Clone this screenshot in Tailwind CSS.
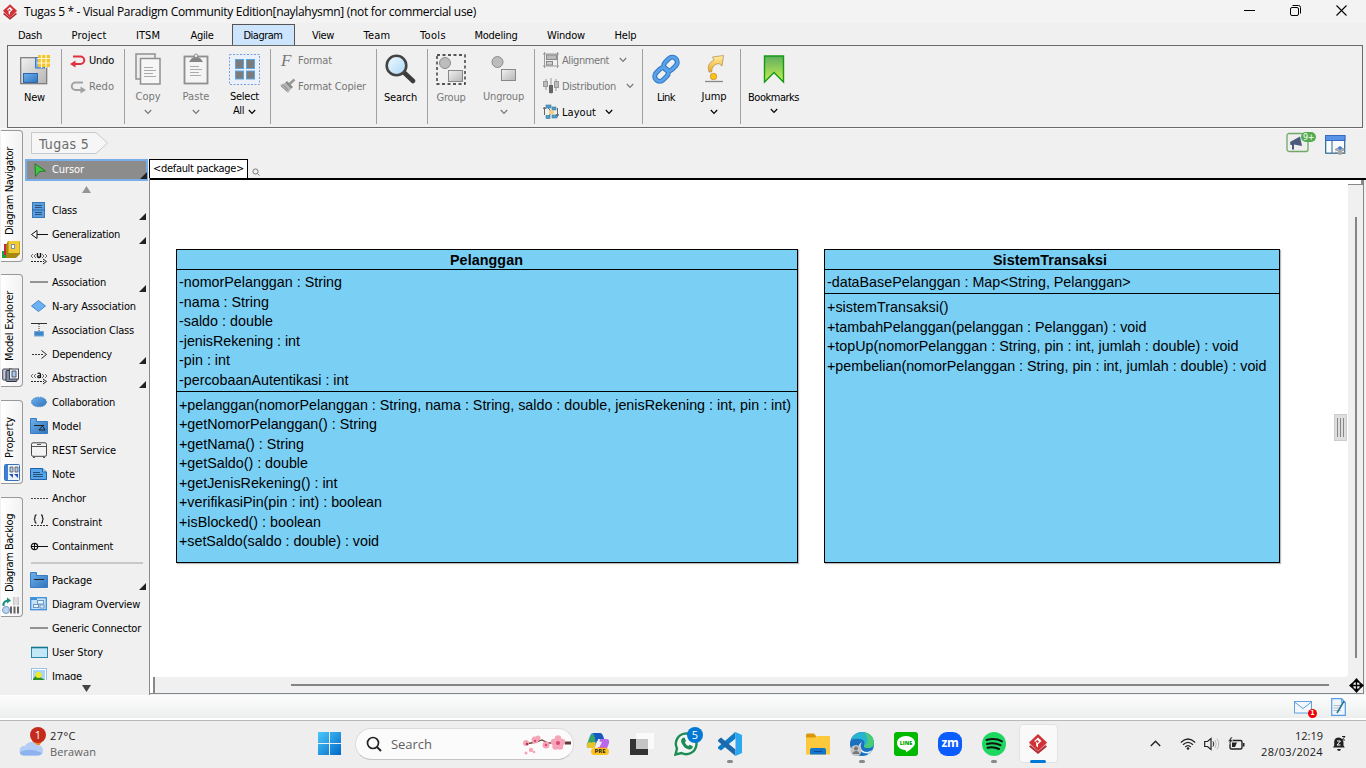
<!DOCTYPE html>
<html lang="en">
<head>
<meta charset="utf-8">
<title>Tugas 5 * - Visual Paradigm Community Edition</title>
<script src="https://cdn.jsdelivr.net/npm/@tailwindcss/browser@4"></script>
</head>
<body class="w-[1366px] h-[768px] overflow-hidden bg-[#f0f0f0] text-black font-['DejaVu_Sans_Condensed','DejaVu_Sans',sans-serif] text-[11px] leading-[14px] whitespace-nowrap">
<svg class="absolute h-0 w-0">
  <defs>
    <linearGradient id="blue" x1="0" y1="0" x2="1" y2="1"><stop offset="0" stop-color="#6fb0ea"/><stop offset="1" stop-color="#2f74be"/></linearGradient>
    <linearGradient id="gray" x1="0" y1="0" x2="1" y2="1"><stop offset="0" stop-color="#f2f2f2"/><stop offset="1" stop-color="#b4b4b4"/></linearGradient>
    <linearGradient id="green" x1="0" y1="0" x2="0" y2="1"><stop offset="0" stop-color="#5fae5f"/><stop offset="1" stop-color="#c9ef50"/></linearGradient>
    <linearGradient id="win" x1="0" y1="0" x2="1" y2="1"><stop offset="0" stop-color="#4cc8fb"/><stop offset="1" stop-color="#0068c8"/></linearGradient>
    <linearGradient id="glass" x1="0" y1="0" x2="1" y2="1"><stop offset="0" stop-color="#f4fbff"/><stop offset="1" stop-color="#a8d6f8"/></linearGradient>
    <linearGradient id="gold" x1="0" y1="0" x2="0" y2="1"><stop offset="0" stop-color="#fff0a8"/><stop offset="1" stop-color="#f2a81c"/></linearGradient>
    <symbol id="vp" viewBox="0 0 18 20"><path d="M9 5L18 12.500L9 20L0 12.500Z" fill="#b02a30"/><path d="M9 2.500L18 10L9 17.500L0 10Z" fill="#e8b0b0"/><path d="M9 0L18 8.500L9 17L0 8.500Z" fill="#d03238"/><path d="M9 3.500L12.500 7L9 10.200L9 13.500L7.200 12V7.500L9 9L10 7.300L8.200 6L6 8L5.200 7Z" fill="#fff"/></symbol>
    <symbol id="chev" viewBox="0 0 8 6"><path d="M.8 1L4 4.300L7.200 1" fill="none" stroke="currentColor" stroke-width="1.200"/></symbol>
    <symbol id="corner" viewBox="0 0 7 7"><path d="M7 0V7H0Z" fill="#222"/></symbol>
  </defs>
</svg>

<div class="flex h-[768px] flex-col">
  <!-- title bar -->
  <header class="flex h-[23px] shrink-0 items-center bg-[#f3f3f3] pl-[3px] font-['Open_Sans','Noto_Sans',sans-serif] text-xs">
    <svg class="h-4 w-[14px]"><use href="#vp"/></svg>
    <span data-w="452" class="ml-[7px] pt-px">Tugas 5 * - Visual Paradigm Community Edition[naylahysmn] (not for commercial use)</span>
    <div class="ml-auto flex items-center gap-[35px] pb-[2px] pr-[19px]">
      <svg class="h-[11px] w-[11px]" viewBox="0 0 11 11"><path d="M0 5.500H11" stroke="#000"/></svg>
      <svg class="h-[11px] w-[11px]" viewBox="0 0 11 11"><rect x=".5" y="2.500" width="8" height="8" rx="1.500" fill="none" stroke="#000"/><path d="M2.500 .5H8.500Q10.500 .5 10.500 2.500V8.500" fill="none" stroke="#000"/></svg>
      <svg class="h-[11px] w-[11px]" viewBox="0 0 11 11"><path d="M.5 .5L10.500 10.500M10.500 .5L.5 10.500" stroke="#000" stroke-width="1.100"/></svg>
    </div>
  </header>

  <!-- menu tabs -->
  <nav class="flex h-[22px] shrink-0 items-end [&_span]:pt-[2px]">
    <div class="flex h-[20px] w-[60px] items-center justify-center"><span data-w="24">Dash</span></div>
    <div class="flex h-[20px] w-[58px] items-center justify-center"><span data-w="35">Project</span></div>
    <div class="flex h-[20px] w-[60px] items-center justify-center"><span data-w="24">ITSM</span></div>
    <div class="flex h-[20px] w-[48px] items-center justify-center"><span data-w="23">Agile</span></div>
    <div class="ml-[6px] flex h-[21px] w-[63px] items-center justify-center border border-b-0 border-[#555] bg-[#cce4fc] pr-px"><span data-w="39">Diagram</span></div>
    <div class="flex h-[20px] w-[56px] items-center justify-center"><span data-w="22">View</span></div>
    <div class="flex h-[20px] w-[52px] items-center justify-center"><span data-w="27">Team</span></div>
    <div class="flex h-[20px] w-[60px] items-center justify-center"><span data-w="26">Tools</span></div>
    <div class="flex h-[20px] w-[66px] items-center justify-center"><span data-w="43">Modeling</span></div>
    <div class="flex h-[20px] w-[74px] items-center justify-center"><span data-w="38">Window</span></div>
    <div class="flex h-[20px] w-[45px] items-center justify-center"><span data-w="22">Help</span></div>
  </nav>

  <!-- ribbon -->
  <section class="ml-[7px] mr-[3px] flex h-[83px] shrink-0 border border-[#696969] py-[3px] text-[#777] [&_span]:pt-[2px]">
    <div class="flex w-[54px] flex-col items-center border-r border-[#a0a0a0] pt-[4px] text-black">
      <svg class="h-8 w-[31px]" viewBox="0 0 31 32"><rect x="1.700" y="4.700" width="26" height="26" fill="url(#gray)" stroke="#777" stroke-width="1.200"/><rect x="16.500" y="5" width="9" height="10" fill="#7db0ea" stroke="#4478b8"/><rect x="4.500" y="20.500" width="14" height="9" fill="url(#blue)" stroke="#2c66ae"/><rect x="19" y="2" width="12" height="12" fill="#f4c430"/><path d="M18 5.500H31M18 10H31M22.500 1V15M27 1V15" stroke="#fff8d0" stroke-width="1.200"/></svg>
      <span data-w="21" class="mt-[4px]">New</span>
    </div>
    <div class="flex w-[63px] flex-col gap-[10px] border-r border-[#a0a0a0] pl-[8px] pt-[3px]">
      <div class="flex items-center gap-[3px] text-black"><svg class="mt-px h-[14px] w-4" viewBox="0 0 16 14"><path d="M3 2.500H10.500A3.700 3.700 0 0 1 10.500 10H4" fill="none" stroke="#e03040" stroke-width="2"/><path d="M5.500 6.500V13.500L0 10Z" fill="#e03040"/></svg><span data-w="25">Undo</span></div>
      <div class="flex items-center gap-[3px]"><svg class="mt-px h-[14px] w-4" viewBox="0 0 16 14"><path d="M13 2.500H5.500A3.700 3.700 0 0 0 5.500 10H11" fill="none" stroke="#a2a2a2" stroke-width="2"/><path d="M10.500 6.500V13.500L16 10Z" fill="#a2a2a2"/></svg><span data-w="25">Redo</span></div>
    </div>
    <div class="flex w-[146px] border-r border-[#a0a0a0] pt-[4px]">
      <div class="flex w-[46px] flex-col items-center">
        <svg class="h-8 w-[26px]" viewBox="0 0 26 32"><rect x="1" y="1" width="19" height="25" fill="#eee" stroke="#909090" stroke-width="1.500"/><rect x="5.500" y="5.500" width="19.500" height="25.500" fill="#f6f6f6" stroke="#909090" stroke-width="1.500"/><path d="M9 14.500H18M9 17.500H21M9 20.500H18M9 23.500H21" stroke="#aaa"/></svg>
        <span data-w="25" class="mt-[3px]">Copy</span><svg class="mt-[5px] h-[6px] w-2"><use href="#chev"/></svg>
      </div>
      <div class="ml-px flex w-[48px] flex-col items-center">
        <svg class="h-8 w-[26px]" viewBox="0 0 26 32"><rect x="1.500" y="3.500" width="23" height="27" fill="#f4f4f4" stroke="#909090" stroke-width="1.800"/><path d="M6 9Q8 5 11 4A2 2 0 0 1 15 4Q18 5 20 9Z" fill="#858585"/><circle cx="13" cy="2.800" r="1.800" fill="#eee" stroke="#909090"/><path d="M7 13.500H16M7 16.500H19M7 19.500H16M7 22.500H18" stroke="#aaa"/></svg>
        <span data-w="27" class="mt-[3px]">Paste</span><svg class="mt-[5px] h-[6px] w-2"><use href="#chev"/></svg>
      </div>
      <div class="flex w-[49px] flex-col items-center text-black">
        <svg class="h-8 w-[31px]" viewBox="0 0 31 32"><rect x=".5" y="1.500" width="30" height="30" fill="#eaf1fa" stroke="#7b9edb" stroke-dasharray="2 1.500"/><g fill="#7c7c7c" stroke="#5aa5e0"><rect x="6.500" y="6.500" width="8" height="9"/><rect x="17.500" y="6.500" width="8" height="9"/><rect x="6.500" y="18" width="8" height="8"/><rect x="17.500" y="18" width="8" height="8"/></g></svg>
        <span data-w="29" class="mt-[3px]">Select</span>
        <div class="-mt-[2px] flex items-center gap-[4px]"><span data-w="11">All</span><svg class="mt-1 h-[6px] w-2"><use href="#chev"/></svg></div>
      </div>
    </div>
    <div class="flex w-[106px] flex-col gap-[10px] border-r border-[#a0a0a0] pl-[8px] pt-[3px]">
      <div class="flex items-center"><span class="w-[19px] pl-[2px] font-['Liberation_Serif',serif] text-[17px] italic leading-[14px]">F</span><span data-w="34">Format</span></div>
      <div class="flex items-center gap-[2px]"><svg class="h-4 w-[17px]" viewBox="0 0 17 16"><path d="M15.500 1.500L10.500 6" stroke="#999" stroke-width="2.500"/><path d="M8 3L14 9L12 11L6 5Z" fill="#8a8a8a"/><path d="M6 5L12 11L9 15L1 7Z" fill="#b5b5b5"/><path d="M4 6.500L9 12M2 8L8 13" stroke="#8a8a8a"/></svg><span data-w="68">Format Copier</span></div>
    </div>
    <div class="flex w-[51px] flex-col items-center border-r border-[#a0a0a0] pr-[3px] pt-[5px] text-black">
      <svg class="h-[31px] w-[31px]" viewBox="0 0 31 31"><path d="M18.500 18L28 27" stroke="#3c3c3c" stroke-width="4.500" stroke-linecap="round"/><circle cx="11.500" cy="11.500" r="9.800" fill="url(#glass)" stroke="#444" stroke-width="2.600"/></svg>
      <span data-w="33" class="mt-[4px]">Search</span>
    </div>
    <div class="flex w-[107px] border-r border-[#a0a0a0] pt-[5px]">
      <div class="flex w-[46px] flex-col items-center">
        <svg class="h-[31px] w-[30px]" viewBox="0 0 30 31"><rect x="1" y="1" width="28" height="29" fill="none" stroke="#222" stroke-width="1.300" stroke-dasharray="3 2.500"/><circle cx="9" cy="9" r="5.500" fill="#bcbcbc" stroke="#8c8c8c"/><rect x="12.500" y="16.500" width="14" height="11" fill="url(#gray)" stroke="#888"/></svg>
        <span data-w="29" class="mt-[4px]">Group</span>
      </div>
      <div class="flex w-[59px] flex-col items-center">
        <svg class="h-[31px] w-[26px]" viewBox="0 0 26 31"><circle cx="6.500" cy="8" r="5.500" fill="#bcbcbc" stroke="#8c8c8c"/><rect x="10.500" y="15.500" width="14" height="11" fill="url(#gray)" stroke="#888"/></svg>
        <span data-w="41" class="mt-[3px]">Ungroup</span><svg class="mt-[5px] h-[6px] w-2"><use href="#chev"/></svg>
      </div>
    </div>
    <div class="flex w-[108px] flex-col gap-[10px] border-r border-[#a0a0a0] pl-[8px] pt-[3px]">
      <div class="flex items-center"><svg class="mr-[3px] h-4 w-4" viewBox="0 0 16 16"><path d="M1.500 0V16M14.500 0V16M0 2H16M0 14H16" stroke="#999"/><rect x="3.500" y="3" width="10" height="4.500" fill="#bbb" stroke="#888"/><rect x="3.500" y="9.500" width="6" height="3.500" fill="#ccc" stroke="#888"/></svg><span data-w="47">Alignment</span><svg class="ml-[10px] h-[6px] w-2"><use href="#chev"/></svg></div>
      <div class="flex items-center"><svg class="mr-[3px] h-4 w-4" viewBox="0 0 16 16"><path d="M3 1V12M8 0V16M13 1V13" stroke="#999"/><rect x=".5" y="3.500" width="4" height="5" fill="#bbb" stroke="#999"/><rect x="6" y="7" width="4" height="8" fill="#666"/><rect x="11.500" y="3.500" width="4" height="6" fill="#bbb" stroke="#999"/></svg><span data-w="54">Distribution</span><svg class="ml-[10px] h-[6px] w-2"><use href="#chev"/></svg></div>
      <div class="flex items-center text-black"><svg class="mr-[3px] h-4 w-4" viewBox="0 0 16 16"><path d="M1.500 4V11M0 5L1.500 3L3 5M14.500 4V12M13 10L14.500 12.500L16 10M5 4L9 8L5 13" fill="none" stroke="#666"/><g fill="#4f9fcc" stroke="#3a7894" stroke-width=".6"><rect x="3" y="1" width="5" height="3"/><rect x="9" y="3" width="4" height="3"/><rect x="3" y="11.500" width="4" height="3"/><rect x="9" y="11" width="5" height="3"/></g><rect x="6" y="6.500" width="5" height="3.500" fill="#f0d080"/></svg><span data-w="34">Layout</span><svg class="ml-[9px] h-[6px] w-2"><use href="#chev"/></svg></div>
    </div>
    <div class="flex w-[98px] border-r border-[#a0a0a0] pt-[5px] text-black">
      <div class="flex w-[46px] flex-col items-center">
        <svg class="h-[31px] w-[30px]" viewBox="0 0 30 31"><g fill="none" stroke="#2f78c4" stroke-width="5"><rect x="-7.500" y="-5" width="15" height="10" rx="5" transform="translate(19.500 10) rotate(-45)"/><rect x="-7.500" y="-5" width="15" height="10" rx="5" transform="translate(10.500 20.500) rotate(-45)"/></g><g fill="none" stroke="#5aa2ea" stroke-width="3"><rect x="-7.500" y="-5" width="15" height="10" rx="5" transform="translate(19.500 10) rotate(-45)"/><rect x="-7.500" y="-5" width="15" height="10" rx="5" transform="translate(10.500 20.500) rotate(-45)"/></g></svg>
        <span data-w="18" class="mt-[4px]">Link</span>
      </div>
      <div class="flex w-[50px] flex-col items-center">
        <svg class="h-[31px] w-[22px]" viewBox="0 0 22 31"><path d="M6 18Q3 10 11 6L9.500 3L20.500 1.500L19 12L16 9.500Q9 10 8.500 18Z" fill="url(#gold)" stroke="#b8935a" stroke-width=".8"/><circle cx="10.500" cy="22.500" r="3.200" fill="#f8c41c" stroke="#d08c18" stroke-width=".8"/><path d="M2 27.500H20" stroke="#888" stroke-width="1.300"/></svg>
        <span data-w="25" class="mt-[3px]">Jump</span><svg class="mt-[5px] h-[6px] w-2"><use href="#chev"/></svg>
      </div>
    </div>
    <div class="flex w-[65px] flex-col items-center pt-[5px] text-black">
      <svg class="h-[31px] w-[22px]" viewBox="0 0 22 31"><path d="M1.500 2H20.500V28L11 18.500L1.500 28Z" fill="url(#green)" stroke="#149a14" stroke-width="1.400"/></svg>
      <span data-w="51" class="mt-[4px]">Bookmarks</span><svg class="mt-[3px] h-[6px] w-2"><use href="#chev"/></svg>
    </div>
  </section>

  <main class="flex h-[567px] shrink-0 border-t border-[#fafafa]">
    <!-- docked pane tabs -->
    <aside class="flex w-[25px] shrink-0 flex-col pl-px pt-px">
      <div class="flex h-[132px] w-[22px] flex-col items-center rounded-tr rounded-br border border-l-0 border-[#999] bg-linear-to-r from-white to-[#f2f2f2] pr-[3px] pt-[16px]">
        <span data-h="88" class="h-[88px] w-[14px] rotate-180 [writing-mode:vertical-rl]">Diagram Navigator</span>
        <svg class="ml-px mt-[5px] h-[19px] w-[18px]" viewBox="0 0 18 19"><path d="M0 11H5V18H0Z" fill="#22a040"/><path d="M2 4H8V15H2Z" fill="#c82840"/><path d="M4 10H10V18H4Z" fill="#2a50b0"/><path d="M6 1H18V14L14 18H4V5Z" fill="#a88810"/><rect x="6.500" y="1" width="11" height="12" fill="#f0cc30"/><rect x="9.500" y="4.500" width="3" height="4" fill="#fff" stroke="#7890c0"/></svg>
      </div>
      <div class="mt-[12px] flex h-[113px] w-[22px] flex-col items-center rounded-tr rounded-br border border-l-0 border-[#999] bg-linear-to-r from-white to-[#f2f2f2] pr-[3px] pt-[16px]">
        <span data-h="70" class="h-[70px] w-[14px] rotate-180 [writing-mode:vertical-rl]">Model Explorer</span>
        <svg class="ml-px mt-[7px] h-[15px] w-[18px]" viewBox="0 0 18 15"><rect x=".7" y="1" width="10" height="11" rx="1" fill="#c0c8d8" stroke="#444"/><rect x="4" y="2.500" width="11" height="11" rx="1" fill="#8090a8" stroke="#334"/><rect x="7.500" y="1" width="9" height="10" fill="#e8f0fa" stroke="#444"/><path d="M10 3H14V9H10Z" fill="#a8c8f0" stroke="#556"/></svg>
      </div>
      <div class="mt-[13px] flex h-[84px] w-[22px] flex-col items-center rounded-tr rounded-br border border-l-0 border-[#999] bg-linear-to-r from-white to-[#f2f2f2] pr-[3px] pt-[16px]">
        <span data-h="41" class="h-[41px] w-[14px] rotate-180 [writing-mode:vertical-rl]">Property</span>
        <svg class="ml-[3px] mt-[6px] h-[17px] w-4" viewBox="0 0 16 17"><rect x=".5" y=".5" width="15" height="16" rx="1" fill="#eef4fc" stroke="#3a70b8"/><path d="M1 1H4V16H1Z" fill="#3a80d8"/><path d="M6 3H9V8H6ZM11 3H14V8H11Z" fill="#b8c8dc" stroke="#445" stroke-width=".7"/><path d="M5 10L9 14V10ZM10 10L14 14V10Z" fill="#2850c0"/></svg>
      </div>
      <div class="mt-[13px] flex h-[120px] w-[22px] flex-col items-center rounded-tr rounded-br border border-l-0 border-[#999] bg-linear-to-r from-white to-[#f2f2f2] pr-[3px] pt-[16px]">
        <span data-h="78" class="h-[78px] w-[14px] rotate-180 [writing-mode:vertical-rl]">Diagram Backlog</span>
        <svg class="ml-px mt-[5px] h-[17px] w-[17px]" viewBox="0 0 17 17"><path d="M1.500 9Q1 4 6 3.500" fill="none" stroke="#18907c" stroke-width="2"/><path d="M5 .5L9 3.500L5 6.500Z" fill="#18907c"/><circle cx="4" cy="13" r="3.500" fill="#b8d4f4" stroke="#7898c0"/><path d="M11.500 .5H13V7.500H11.500ZM15 .5H16.500V7.500H15Z" fill="#eee" stroke="#aaa" stroke-width=".6"/><path d="M8 9.500H10V16.500H8ZM11.500 9.500H13.500V16.500H11.500ZM15 9.500H17V16.500H15Z" fill="#666"/></svg>
      </div>
    </aside>

    <div class="flex min-w-0 flex-1 flex-col">
      <!-- breadcrumb -->
      <div class="flex h-[30px] shrink-0 pl-[6px] pt-[3px]">
        <div class="relative h-[23px] w-[78px]">
          <svg class="absolute inset-0 h-[23px] w-[78px]" viewBox="0 0 78 23"><path d="M.5 .5H65L76.500 11L65 21.500H.5Z" fill="#f6f6f6" stroke="#c6cacc"/></svg>
          <span data-w="50" class="absolute left-[8px] top-[3px] text-[14px] leading-[18px] text-[#6b6b6b]">Tugas 5</span>
        </div>
        <div class="ml-auto mr-[20px] flex gap-[9px]">
          <div class="relative h-[24px] w-[30px]">
            <svg class="h-[24px] w-[30px]" viewBox="0 0 30 24"><rect x="1" y="1.500" width="21" height="18" rx="2" fill="#eee" stroke="#6fa868" stroke-width="1.300"/><path d="M4 10L14 4.500L16 14L8 12.500V17.500H6V13L4.500 13Z" fill="#4a5a78"/></svg>
            <span class="absolute right-0 top-0 h-[10px] w-[15px] rounded-full bg-[#55ab50] text-center text-[9px] leading-[10px] tracking-tighter text-white">9+</span>
          </div>
          <svg class="mt-[3px] h-[20px] w-[21px]" viewBox="0 0 21 20"><rect x=".7" y=".7" width="19" height="17.500" fill="#f8fbff" stroke="#28688c" stroke-width="1.200"/><rect x=".5" y=".5" width="19.500" height="5" fill="#5794e8" stroke="#3868c0"/><path d="M7 6V18" stroke="#28688c"/><path d="M10 14.500L15 12L20 14.500L15 17ZM10 17L15 19.500L20 17" fill="#b0b0b8" stroke="#888" stroke-width=".8"/><circle cx="15" cy="13" r="1.800" fill="#3a80d0"/></svg>
        </div>
      </div>

      <div class="flex min-h-0 flex-1">
        <!-- tool palette -->
        <div class="flex w-[124px] shrink-0 flex-col">
          <div class="relative flex h-[22px] w-[123px] shrink-0 items-center border-2 border-[#7aaee8] bg-[#8c8c8c] pl-[7px] text-white">
            <svg class="h-[14px] w-[12px]" viewBox="0 0 12 14"><path d="M1 .8L11.500 8L5.500 8.500L1.500 13.500Z" fill="#40c840" stroke="#247428" stroke-width=".9"/></svg>
            <span data-w="32" class="ml-[6px]">Cursor</span>
            <svg class="absolute -right-px bottom-0 h-[7px] w-[7px]"><use href="#corner"/></svg>
          </div>
          <div class="flex h-[17px] shrink-0 items-center justify-center pr-px"><svg class="h-[7px] w-[9px]" viewBox="0 0 9 7"><path d="M4.500 0L9 7H0Z" fill="#969696"/></svg></div>
          <div class="flex h-[482px] shrink-0 flex-col overflow-hidden [&_span]:pt-[2px]">
            <div class="relative flex h-6 shrink-0 items-center gap-[4px] pl-[5px]"><svg class="h-4 w-[18px]" viewBox="0 0 18 16"><rect x="2.500" y=".5" width="12" height="15" fill="#5a9ee0" stroke="#3878b8"/><path d="M2 8H15" stroke="#2a68a8"/><path d="M5 3.500H12M5 5.500H12M5 10.500H12M5 12.500H12" stroke="#2c5480"/></svg><span data-w="25">Class</span><svg class="absolute right-[3px] bottom-[2px] h-[7px] w-[7px]"><use href="#corner"/></svg></div>
            <div class="relative flex h-6 shrink-0 items-center gap-[4px] pl-[5px]"><svg class="h-4 w-[18px]" viewBox="0 0 18 16"><path d="M7 8.500H18M7 4.500V12.500L1.500 8.500Z" fill="#fff" stroke="#111"/></svg><span data-w="68">Generalization</span><svg class="absolute right-[3px] bottom-[2px] h-[7px] w-[7px]"><use href="#corner"/></svg></div>
            <div class="flex h-6 shrink-0 items-center gap-[4px] pl-[5px]"><svg class="h-4 w-[18px]" viewBox="0 0 18 16"><path d="M3 4L1 6L3 8M6 4L4 6L6 8M12 4L14 6L12 8M15 4L17 6L15 8" fill="none" stroke="#444" stroke-width=".8"/><path d="M7.500 3V6.500Q9 8.500 10.500 6.500V3" fill="none" stroke="#111" stroke-width="1.400"/><path d="M1 11.500H14" stroke="#222" stroke-dasharray="2 1"/><path d="M13 9L16.500 11.500L13 14" fill="none" stroke="#222"/></svg><span data-w="30">Usage</span></div>
            <div class="relative flex h-6 shrink-0 items-center gap-[4px] pl-[5px]"><svg class="h-4 w-[18px]" viewBox="0 0 18 16"><path d="M0 8H18" stroke="#888" stroke-width="1.800"/></svg><span data-w="54">Association</span><svg class="absolute right-[3px] bottom-[2px] h-[7px] w-[7px]"><use href="#corner"/></svg></div>
            <div class="flex h-6 shrink-0 items-center gap-[4px] pl-[5px]"><svg class="h-4 w-[18px]" viewBox="0 0 18 16"><path d="M8.500 2.500L15.500 8L8.500 13.500L1.500 8Z" fill="#6cb2f2" stroke="#4088cc"/></svg><span data-w="84">N-ary Association</span></div>
            <div class="flex h-6 shrink-0 items-center gap-[4px] pl-[5px]"><svg class="h-4 w-[18px]" viewBox="0 0 18 16"><path d="M1 1.500H17" stroke="#333"/><path d="M9 2V9" stroke="#333" stroke-dasharray="1 1"/><rect x="4.500" y="9.500" width="9" height="4.500" fill="#3e86c8" stroke="#78a8d8"/></svg><span data-w="82">Association Class</span></div>
            <div class="relative flex h-6 shrink-0 items-center gap-[4px] pl-[5px]"><svg class="h-4 w-[18px]" viewBox="0 0 18 16"><path d="M2 8.500H13" stroke="#333" stroke-dasharray="2 1"/><path d="M11.500 4.500L16.500 8.500L11.500 12.500" fill="none" stroke="#222"/></svg><span data-w="60">Dependency</span><svg class="absolute right-[3px] bottom-[2px] h-[7px] w-[7px]"><use href="#corner"/></svg></div>
            <div class="relative flex h-6 shrink-0 items-center gap-[4px] pl-[5px]"><svg class="h-4 w-[18px]" viewBox="0 0 18 16"><path d="M3 4L1 6L3 8M6 4L4 6L6 8M12 4L14 6L12 8M15 4L17 6L15 8" fill="none" stroke="#444" stroke-width=".8"/><path d="M7.500 3.500Q10.500 2.500 10.500 5V8M10.500 5.500Q7.500 5.500 7.700 7Q8.500 8.500 10.500 7" fill="none" stroke="#111" stroke-width="1.200"/><path d="M1 11.500H14" stroke="#222" stroke-dasharray="2 1"/><path d="M13 9L16.500 11.500L13 14" fill="none" stroke="#222"/></svg><span data-w="55">Abstraction</span><svg class="absolute right-[3px] bottom-[2px] h-[7px] w-[7px]"><use href="#corner"/></svg></div>
            <div class="flex h-6 shrink-0 items-center gap-[4px] pl-[5px]"><svg class="h-4 w-[18px]" viewBox="0 0 18 16"><ellipse cx="9" cy="8" rx="7.500" ry="4.800" fill="url(#blue)" stroke="#4a88c8" stroke-dasharray="1.500 1"/></svg><span data-w="63">Collaboration</span></div>
            <div class="flex h-6 shrink-0 items-center gap-[4px] pl-[5px]"><svg class="h-4 w-[18px]" viewBox="0 0 18 16"><path d="M.5 .5H6.500V3.500H17.500V15.500H.5Z" fill="url(#blue)" stroke="#3a7cc0"/><path d="M4 7.500H14M15 12H9L12.500 8L15 12" fill="none" stroke="#222"/></svg><span data-w="29">Model</span></div>
            <div class="flex h-6 shrink-0 items-center gap-[4px] pl-[5px]"><svg class="h-4 w-[18px]" viewBox="0 0 18 16"><rect x="1.500" y=".8" width="15" height="13.500" rx="1.500" fill="#f4f4f4" stroke="#444"/><path d="M1.500 4.500H16.500M7 2.500H11M3 15.500H5M13 15.500H15" stroke="#555"/></svg><span data-w="64">REST Service</span></div>
            <div class="flex h-6 shrink-0 items-center gap-[4px] pl-[5px]"><svg class="h-4 w-[18px]" viewBox="0 0 18 16"><path d="M.5 2.500H12.500L16.500 6V13.500H.5Z" fill="#58a6ea" stroke="#1c60a8"/><path d="M12.500 2.500V6H16.500" fill="#a8d4f8" stroke="#1c60a8"/><path d="M3 6.500H10M3 8.500H13M3 10.500H13" stroke="#24507c"/></svg><span data-w="23">Note</span></div>
            <div class="flex h-6 shrink-0 items-center gap-[4px] pl-[5px]"><svg class="h-4 w-[18px]" viewBox="0 0 18 16"><path d="M1 8.500H18" stroke="#444" stroke-dasharray="2 1"/></svg><span data-w="34">Anchor</span></div>
            <div class="flex h-6 shrink-0 items-center gap-[4px] pl-[5px]"><svg class="h-4 w-[18px]" viewBox="0 0 18 16"><path d="M6.500 .8Q5 .8 5 3Q5 5 3.800 5Q5 5 5 7Q5 9.200 6.500 9.200M11 .8Q12.500 .8 12.500 3Q12.500 5 13.700 5Q12.500 5 12.500 7Q12.500 9.200 11 9.200" fill="none" stroke="#222" stroke-width="1.200"/><path d="M1 11.500H18" stroke="#333" stroke-dasharray="2 1"/></svg><span data-w="50">Constraint</span></div>
            <div class="flex h-6 shrink-0 items-center gap-[4px] pl-[5px]"><svg class="h-4 w-[18px]" viewBox="0 0 18 16"><circle cx="4.500" cy="8.500" r="3.200" fill="none" stroke="#111" stroke-width="1.200"/><path d="M1 8.500H18M4.500 5V12" stroke="#111"/></svg><span data-w="61">Containment</span></div>
            <div class="flex h-[10px] shrink-0 items-center pl-[6px]"><div class="h-[2px] w-[112px] bg-[#c8c8c8]"></div></div>
            <div class="relative flex h-6 shrink-0 items-center gap-[4px] pl-[5px]"><svg class="h-4 w-[18px]" viewBox="0 0 18 16"><path d="M.5 .5H6.500V3.500H17.500V15.500H.5Z" fill="url(#blue)" stroke="#3a7cc0"/><path d="M4 7.500H14" stroke="#222"/></svg><span data-w="40">Package</span><svg class="absolute right-[3px] bottom-[2px] h-[7px] w-[7px]"><use href="#corner"/></svg></div>
            <div class="flex h-6 shrink-0 items-center gap-[4px] pl-[5px]"><svg class="h-4 w-[18px]" viewBox="0 0 18 16"><rect x=".7" y="1.700" width="15.600" height="12" fill="#c4e2fa" stroke="#3c90dc" stroke-width="1.300"/><path d="M1 2H7V4H1Z" fill="#3c90dc"/><g fill="#e8f4fd" stroke="#6a98c0"><rect x="7.500" y="4.500" width="6" height="3.500"/><rect x="3.500" y="8.500" width="5" height="3"/><rect x="10" y="9" width="4" height="3"/></g></svg><span data-w="88">Diagram Overview</span></div>
            <div class="flex h-6 shrink-0 items-center gap-[4px] pl-[5px]"><svg class="h-4 w-[18px]" viewBox="0 0 18 16"><path d="M0 8H18" stroke="#888" stroke-width="1.800"/></svg><span data-w="89">Generic Connector</span></div>
            <div class="flex h-6 shrink-0 items-center gap-[4px] pl-[5px]"><svg class="h-4 w-[18px]" viewBox="0 0 18 16"><rect x="1.500" y="3.500" width="16" height="10" fill="#c2e8f8" stroke="#2888a8"/><path d="M1 3.500H18" stroke="#167890" stroke-width="1.600"/></svg><span data-w="51">User Story</span></div>
            <div class="flex h-6 shrink-0 items-center gap-[4px] pl-[5px]"><svg class="h-4 w-[18px]" viewBox="0 0 18 16"><rect x="1.500" y=".5" width="15" height="15" fill="#fff" stroke="#9cc0e4"/><rect x="3" y="2" width="12" height="13" fill="#a8d4f8"/><path d="M3 11Q7 5 10 9L15 12V16H3Z" fill="#2c8c28"/><circle cx="8.500" cy="7" r="3" fill="#f0ec20"/></svg><span data-w="30">Image</span></div>
          </div>
          <div class="flex h-[15px] items-center justify-center pr-px pt-px"><svg class="h-[7px] w-[9px]" viewBox="0 0 9 7"><path d="M0 0H9L4.500 7Z" fill="#444"/></svg></div>
        </div>

        <!-- diagram editor -->
        <div class="flex min-w-0 flex-1 flex-col border-l border-[#8a8a90]">
          <div class="flex h-[19px] shrink-0 items-center">
            <div class="-ml-px flex h-[19px] w-[99px] items-center justify-center border border-b-0 border-black bg-white"><span data-w="91">&lt;default package&gt;</span></div>
            <svg class="ml-[4px] mt-[7px] h-2 w-2" viewBox="0 0 8 8"><circle cx="3.500" cy="3.500" r="2.600" fill="none" stroke="#777"/><path d="M5.500 5.500L7.500 7.500" stroke="#777"/></svg>
          </div>
          <div class="flex h-[499px] shrink-0 border-t-2 border-t-black">
            <div class="relative flex-1 rounded-br bg-white font-['Liberation_Sans',Arial,sans-serif] text-[14.3px]">
              <div class="absolute left-[26px] top-[69px] flex h-[314px] w-[622px] flex-col border border-black bg-[#7acff5] shadow-[1px_1px_1px_#bbb]">
                <div class="flex h-[20px] shrink-0 items-center justify-center border-b border-black pr-px font-bold"><span data-w="73">Pelanggan</span></div>
                <div class="flex h-[122px] shrink-0 flex-col border-b border-black pl-[2px] pt-[3px] leading-[19.55px]">
                  <div><span data-w="163">-nomorPelanggan : String</span></div>
                  <div><span data-w="90">-nama : String</span></div>
                  <div><span data-w="94">-saldo : double</span></div>
                  <div><span data-w="121">-jenisRekening : int</span></div>
                  <div><span data-w="51">-pin : int</span></div>
                  <div><span data-w="169.500">-percobaanAutentikasi : int</span></div>
                </div>
                <div class="flex flex-col pl-[2px] pt-[4px] leading-[19.45px]">
                  <div><span data-w="612">+pelanggan(nomorPelanggan : String, nama : String, saldo : double, jenisRekening : int, pin : int)</span></div>
                  <div><span data-w="198">+getNomorPelanggan() : String</span></div>
                  <div><span data-w="125">+getNama() : String</span></div>
                  <div><span data-w="129">+getSaldo() : double</span></div>
                  <div><span data-w="158.500">+getJenisRekening() : int</span></div>
                  <div><span data-w="203">+verifikasiPin(pin : int) : boolean</span></div>
                  <div><span data-w="142">+isBlocked() : boolean</span></div>
                  <div><span data-w="200">+setSaldo(saldo : double) : void</span></div>
                </div>
              </div>
              <div class="absolute left-[674px] top-[69px] flex h-[314px] w-[456px] flex-col border border-black bg-[#7acff5] shadow-[1px_1px_1px_#bbb]">
                <div class="flex h-[20px] shrink-0 items-center justify-center border-b border-black pr-[4px] font-bold"><span data-w="114">SistemTransaksi</span></div>
                <div class="h-[24px] shrink-0 border-b border-black pl-[2px] pt-[3px] leading-[19.5px]"><span data-w="303.500">-dataBasePelanggan : Map&lt;String, Pelanggan&gt;</span></div>
                <div class="flex flex-col pl-[2px] pt-[4px] leading-[19.5px]">
                  <div><span data-w="121.500">+sistemTransaksi()</span></div>
                  <div><span data-w="319.500">+tambahPelanggan(pelanggan : Pelanggan) : void</span></div>
                  <div><span data-w="411.500">+topUp(nomorPelanggan : String, pin : int, jumlah : double) : void</span></div>
                  <div><span data-w="439.500">+pembelian(nomorPelanggan : String, pin : int, jumlah : double) : void</span></div>
                </div>
              </div>
              <div class="absolute right-px top-[234px] flex h-[27px] w-[13px] justify-center gap-[2px] border border-[#ccc] bg-[#dedede] py-[3px]">
                <div class="w-px bg-[#888]"></div><div class="w-px bg-[#888]"></div><div class="w-px bg-[#888]"></div>
              </div>
            </div>
            <div class="flex w-[16px] flex-col items-center border-r border-[#808890]">
              <div class="h-[5px] w-[15px] border-b border-r-2 border-[#888] bg-white"></div>
              <div class="mt-[32px] h-[441px] w-[2px] bg-[#858585]"></div>
            </div>
            <div class="w-[2px]"></div>
          </div>
          <div class="mr-[2px] flex h-[17px] shrink-0 items-center border-b border-r border-[#808890]">
            <div class="h-[17px] w-[5px] border-b border-r-2 border-[#888] bg-white"></div>
            <div class="ml-[136px] h-[2px] w-[1038px] bg-[#858585]"></div>
            <svg class="-mr-px ml-auto h-[15px] w-[15px]" viewBox="0 0 15 15"><path d="M7.500 0L11 4H4ZM7.500 15L11 11H4ZM0 7.500L4 4V11ZM15 7.500L11 4V11Z" fill="#000"/><circle cx="7.500" cy="7.500" r="4" fill="#f0f0f0" stroke="#000" stroke-width="1.300"/><path d="M7.500 2V13M2 7.500H13" stroke="#000" stroke-width="1.300"/></svg>
          </div>
        </div>
      </div>
    </div>
  </main>

  <!-- status bar -->
  <div class="flex h-[25px] shrink-0 items-center justify-end gap-[14px] border-b-2 border-white bg-linear-to-b from-[#fdfdfd] to-[#eceeee] pr-[20px]">
    <div class="relative mt-[3px] h-[14px] w-[23px]">
      <svg class="h-[14px] w-[19px]" viewBox="0 0 19 14"><rect x=".5" y=".5" width="17" height="11.500" fill="#f2f8fe" stroke="#62a0e0"/><path d="M.5 1L9 7.500L17.500 1" fill="none" stroke="#62a0e0"/></svg>
      <span class="absolute -bottom-[3px] right-0 h-[9px] w-[9px] rounded-full bg-[#f00000] text-center text-[7px] font-bold leading-[9px] text-white">1</span>
    </div>
    <svg class="h-[18px] w-[15px]" viewBox="0 0 15 18"><path d="M.7 .7H10.500L14.300 4.500V17.300H.7Z" fill="#eef6fe" stroke="#5a9ce0" stroke-width="1.200"/><path d="M10.500 .7V4.500H14.300" fill="none" stroke="#5a9ce0"/><path d="M2.500 7.500H10M2.500 10H10M2.500 12.500H10" stroke="#bbb"/><path d="M13 3L6 15" stroke="#287898" stroke-width="1.600"/></svg>
  </div>

  <!-- taskbar -->
  <footer class="flex h-[48px] shrink-0 items-center border-t border-[#b8b8b8] bg-[#eeeeee] pb-[2px] font-['Open_Sans','Noto_Sans',sans-serif] text-[11px] leading-4 text-[#1a1a1a]">
    <div class="flex w-[310px] items-center pl-[18px]">
      <div class="relative -mt-[3px] h-[30px] w-[28px]">
        <svg class="h-[30px] w-[28px]" viewBox="0 0 28 30"><circle cx="19" cy="14" r="4.500" fill="#f08020"/><path d="M5 28.500A5 5 0 0 1 5 19Q6 19 7 19A7 7 0 0 1 19 18Q25 18 25 23.500Q25 28.500 20 28.500Z" fill="#b4cdf6"/><path d="M2 25Q12 20 24 26Q22 28.500 20 28.500H5Q2 28 2 25Z" fill="#8eb2ee"/></svg>
        <span class="absolute left-[12px] top-0 h-4 w-4 rounded-full bg-[#c42b1c] text-center text-white">1</span>
      </div>
      <div class="ml-[4px] flex flex-col"><span data-w="26">27°C</span><span data-w="46" class="text-[#606060]">Berawan</span></div>
    </div>
    <svg class="ml-[8px] h-[23px] w-[23px]" viewBox="0 0 23 23"><path d="M0 0H11V11H0ZM12 0H23V11H12ZM0 12H11V23H0ZM12 12H23V23H12Z" fill="url(#win)"/></svg>
    <div class="ml-[14px] flex h-8 w-[219px] items-center rounded-full border border-[#dcdcdc] border-b-[#c4c4c4] bg-[#fbfbfb] pl-[10px]">
      <svg class="h-[16px] w-[16px]" viewBox="0 0 16 16"><circle cx="7" cy="7" r="5.500" fill="none" stroke="#222" stroke-width="1.700"/><path d="M11 11L15 15" stroke="#222" stroke-width="1.900"/></svg>
      <span data-w="41" class="ml-[9px] text-[13px] text-[#606060]">Search</span>
      <svg class="ml-auto mr-[1px] h-[24px] w-[50px]" viewBox="0 0 50 24"><path d="M4 12L14 10L20 8L26 11L36 11L49 11" fill="none" stroke="#6c4438" stroke-width="1.300"/><path d="M43 11H49" stroke="#5c3c38" stroke-width="3"/><g fill="#f8a4b8"><circle cx="4" cy="11" r="3"/><circle cx="13" cy="8" r="3.500"/><circle cx="16" cy="6" r="2.500"/><circle cx="24" cy="13" r="3.500"/><circle cx="36" cy="6.500" r="3.200"/><circle cx="40" cy="10" r="3.200"/><circle cx="38" cy="14.500" r="3.200"/><circle cx="33.500" cy="14.500" r="3.200"/><circle cx="32" cy="10" r="3.200"/><circle cx="9" cy="18" r="2.200"/><circle cx="4" cy="21" r="1.500"/><circle cx="12" cy="20" r="1.300"/></g><circle cx="36" cy="11" r="2" fill="#d84870"/><circle cx="13" cy="9" r="1.200" fill="#d84870"/><circle cx="24" cy="13" r="1.200" fill="#d84870"/><circle cx="5" cy="12" r="1.300" fill="#a04050"/></svg>
    </div>
    <div class="ml-[2px] flex h-full items-center">
      <div class="relative flex h-full w-11 items-center justify-center">
        <svg class="h-6 w-6" viewBox="0 0 24 24"><path d="M7 1H14Q16 1 17 4L18 7H12L9 16H3Q0 16 1 12L4 4Q5 1 7 1Z" fill="#2090d8"/><path d="M3 7L1 13Q0 16 3 16H9L10 10Q6 11 3 7Z" fill="#e8c428"/><path d="M5 3L2 10Q8 12 10 7L12 3Z" fill="#38a860"/><path d="M14 1Q16 1 17 4L18 7H12L10 12Q9 4 7 1Z" fill="#1858c0"/><path d="M14 7H20Q24 7 23 11L20 19Q19 22 16 22H9Q11 21 12 17Z" fill="#b868e8"/><path d="M16 10L12 18H8L11 9Z" fill="#eef0f8"/><path d="M12 15L11 20H17L20 15Z" fill="#f06888"/></svg>
        <span class="absolute left-[15px] top-[27px] h-[7px] w-[18px] rounded-sm bg-[#fcc41c] text-center text-[6px] font-bold leading-[7px]">PRE</span>
      </div>
      <div class="flex h-full w-11 items-center justify-center"><svg class="h-[22px] w-6" viewBox="0 0 24 22"><rect y="6" width="18" height="16" fill="#333"/><rect x="6" width="18" height="16" fill="#fafafa"/><rect x="6" y="6" width="12" height="10" fill="#c4c4c4"/></svg></div>
      <div class="relative flex h-full w-11 items-center justify-center"><svg class="h-[25px] w-[25px]" viewBox="0 0 25 25"><path d="M1.500 23.500L3 17.500A10.300 10.300 0 1 1 7.500 22Z" fill="#f4f4f4" stroke="#1c8c54" stroke-width="2.400"/><path d="M8.500 7L10.500 6.500L12 10L10.800 11.500Q12 14 14.300 15L15.800 13.800L19 15.500Q18 19 15 18.500Q9 17 7 10.500Q7 8 8.500 7Z" fill="#1c8c54"/></svg><span class="absolute right-[5px] top-[6px] h-4 w-4 rounded-full bg-[#0078d4] text-center text-white">5</span></div>
      <div class="relative flex h-full w-11 items-center justify-center"><svg class="h-6 w-6" viewBox="0 0 24 24"><path d="M17.500 0V6.500L3 18.500L0 16.500V15L17 .2Z" fill="#0c7cc8"/><path d="M0 8L3 5.500L17.500 17.500V24L.2 9.500Z" fill="#1c68ac"/><path d="M17.500 0L24 3V21L17.500 24Z" fill="#2ca8f0"/></svg><i class="absolute bottom-[3px] h-[3px] w-[6px] rounded-full bg-[#888]"></i></div>
      <div class="w-11"></div>
      <div class="flex h-full w-11 items-center justify-center"><svg class="h-[22px] w-6" viewBox="0 0 24 22"><path d="M0 2Q0 .5 1.500 .5H8L10 3V8H0Z" fill="#d89808"/><path d="M0 4.500H9L11 3H24V21.500H0Z" fill="#fcc83c"/><path d="M4 21.500V17Q4 15 6 15H18Q20 15 20 17V21.500Z" fill="#1474cc"/><path d="M8 18.500H16" stroke="#0c4c94"/></svg></div>
      <div class="relative flex h-full w-11 items-center justify-center"><svg class="h-6 w-6" viewBox="0 0 24 24"><circle cx="12" cy="12" r="12" fill="#1870c0"/><path d="M1 8Q4 0 12 0Q22 0 24 10Q24 16 18 16Q13 16 14 13Q16 8 10 7Q4 6 1 8Z" fill="#28b4d0"/><path d="M14 0Q23 2 24 10Q24 16 18 16Q14 16 14 14Q21 9 14 0Z" fill="#48cc78"/><path d="M12 10Q9 14 12 18Q16 22 22 18Q21 20 19 21.500Q12 22 9 17Q8 12 12 10Z" fill="#e8f0f8"/><circle cx="6" cy="18.500" r="5.500" fill="#c4c4c4"/><circle cx="6" cy="16.500" r="2" fill="#777"/><path d="M2.500 22Q3 19 6 19Q9 19 9.500 22Z" fill="#777"/></svg><i class="absolute bottom-[3px] h-[3px] w-[6px] rounded-full bg-[#888]"></i></div>
      <div class="relative flex h-full w-11 items-center justify-center"><svg class="h-6 w-6" viewBox="0 0 24 24"><rect width="24" height="24" rx="3" fill="#00b900"/><path d="M12 4C17 4 21 7 21 11C21 15 14 19 12 20.500C12 19 12 18 11 18C6 17.500 3 14.500 3 11C3 7 7 4 12 4Z" fill="#fff"/></svg><span class="absolute top-[17px] text-[5.500px] font-extrabold leading-[10px] text-[#00a900]">LINE</span></div>
      <div class="flex h-full w-11 items-center justify-center"><div class="flex h-6 w-6 items-center justify-center rounded-[9px] bg-[#0b5cff] pb-[2px] text-[12px] font-bold tracking-tight text-white">zm</div></div>
      <div class="relative flex h-full w-11 items-center justify-center"><svg class="h-6 w-6" viewBox="0 0 24 24"><circle cx="12" cy="12" r="12" fill="#1ed760"/><path d="M4.500 8Q13 5.500 20 9.300M5 12Q12 10 18.500 13.200M5.500 15.700Q11.500 14.300 17 17" fill="none" stroke="#111" stroke-width="2" stroke-linecap="round"/></svg><i class="absolute bottom-[3px] h-[3px] w-[6px] rounded-full bg-[#888]"></i></div>
      <div class="relative flex h-full w-11 items-center justify-center"><div class="flex h-[39px] w-[39px] items-center justify-center rounded border border-[#e2e2e2] bg-[#f9f9f9]"><svg class="h-[22px] w-[18px]"><use href="#vp"/></svg></div><i class="absolute bottom-[3px] h-[3px] w-4 rounded-full bg-[#0078d4]"></i></div>
    </div>
    <div class="ml-auto flex items-center pr-[20px]">
      <svg class="h-[7px] w-[11px]" viewBox="0 0 11 7"><path d="M.8 6L5.500 1.200L10.200 6" fill="none" stroke="#222" stroke-width="1.400"/></svg>
      <svg class="ml-[19px] h-3 w-4" viewBox="0 0 16 12"><g fill="none" stroke="#222" stroke-width="1.200"><path d="M.8 4.500Q8 -2.500 15.200 4.500M3 6.800Q8 2 13 6.800M5.200 9Q8 6.300 10.800 9"/></g><circle cx="8" cy="10.500" r="1.300" fill="#222"/></svg>
      <svg class="ml-[8px] h-[14px] w-4" viewBox="0 0 16 14"><path d="M.7 4.500H3.500L7 1.500V12.500L3.500 9.500H.7Z" fill="none" stroke="#222" stroke-width="1.200"/><path d="M9 4.500Q10.500 7 9 9.500" fill="none" stroke="#222"/><path d="M11 3Q13.500 7 11 11M13 1.500Q16.500 7 13 12.500" fill="none" stroke="#bbb"/></svg>
      <svg class="ml-[8px] h-[13px] w-[17px]" viewBox="0 0 17 13"><rect x="2" y="3.500" width="12" height="8.500" rx="1.500" fill="none" stroke="#222" stroke-width="1.400"/><path d="M15 6H16.500V9.500H15Z" fill="#222"/><path d="M4 5.500H9L7 10H4Z" fill="#222"/><path d="M3 0L0 4.500H2L1 7.500L5 3H3L4.500 0Z" fill="#222" stroke="#eee" stroke-width=".5"/></svg>
      <div class="ml-[16px] flex flex-col items-end"><span data-w="28">12:19</span><span data-w="62">28/03/2024</span></div>
      <svg class="ml-[9px] h-[15px] w-[14px]" viewBox="0 0 14 15"><path d="M1 11.500L2.200 9.500V5.500Q2.500 1.500 7 1.500Q9 1.500 10 3L11.500 6V9.500L12.800 11.500Z" fill="#222"/><path d="M5 13H9Q8.500 15 7 15Q5.500 15 5 13Z" fill="#222"/><path d="M5 5H8.500L5 9H8.500" fill="none" stroke="#fff"/><path d="M10 .5H13L10 4H13" fill="none" stroke="#222"/></svg>
    </div>
  </footer>
</div>

<script>
  // Spread each label's letters so that it fills its nominal text width.
  document.querySelectorAll('[data-w]').forEach(function (el) {
    var r = document.createRange();
    r.selectNodeContents(el);
    el.style.letterSpacing = ((el.dataset.w - r.getBoundingClientRect().width) / el.textContent.length).toFixed(3) + 'px';
  });
  document.querySelectorAll('[data-h]').forEach(function (el) {
    var r = document.createRange();
    r.selectNodeContents(el);
    el.style.letterSpacing = ((el.dataset.h - r.getBoundingClientRect().height) / el.textContent.length).toFixed(3) + 'px';
  });
</script>
</body>
</html>
